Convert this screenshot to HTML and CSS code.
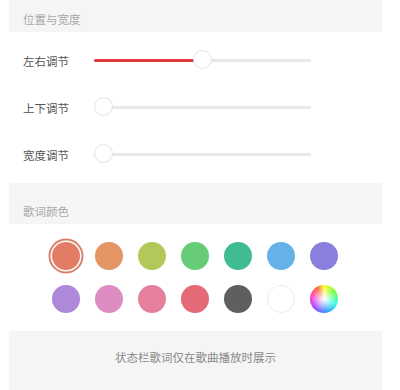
FILE: index.html
```html
<!DOCTYPE html>
<html>
<head>
<meta charset="utf-8">
<link rel="stylesheet" href="styles.css">
</head>
<body>
<div class="page">
  <div class="header h1">位置与宽度</div>
  <div class="sliders">
    <div class="row">
      <span class="label">左右调节</span>
      <div class="track">
        <div class="fill" style="width:108px"></div>
        <div class="thumb" style="left:99px"></div>
      </div>
    </div>
    <div class="row">
      <span class="label">上下调节</span>
      <div class="track">
        <div class="thumb" style="left:0"></div>
      </div>
    </div>
    <div class="row">
      <span class="label">宽度调节</span>
      <div class="track">
        <div class="thumb" style="left:0"></div>
      </div>
    </div>
  </div>
  <div class="header h2">歌词颜色</div>
  <div class="colors">
    <div class="crow">
      <span class="dot sel" style="background:#e27c67"></span>
      <span class="dot" style="background:#e39563"></span>
      <span class="dot" style="background:#b2c95a"></span>
      <span class="dot" style="background:#66cc77"></span>
      <span class="dot" style="background:#3fbc94"></span>
      <span class="dot" style="background:#65b2e8"></span>
      <span class="dot" style="background:#8a7fdc"></span>
    </div>
    <div class="crow">
      <span class="dot" style="background:#ae88d9"></span>
      <span class="dot" style="background:#dc8cc0"></span>
      <span class="dot" style="background:#e5809c"></span>
      <span class="dot" style="background:#e46a78"></span>
      <span class="dot" style="background:#5f5f5f"></span>
      <span class="dot white"></span>
      <span class="dot rainbow"></span>
    </div>
  </div>
  <div class="footer">状态栏歌词仅在歌曲播放时展示</div>
</div>
</body>
</html>
```
FILE: styles.css
```css
html, body {
  margin: 0;
  padding: 0;
  background: #fff;
}
body {
  font-family: "Noto Sans CJK SC", "Noto Sans", sans-serif;
  width: 400px;
  height: 390px;
  overflow: hidden;
}
.page {
  margin: 0 18px 0 9px;
}
.header {
  background: #f5f5f5;
  color: #a8a8a8;
  font-size: 11.5px;
  padding-left: 14px;
  box-sizing: border-box;
}
.h1 {
  height: 32px;
  line-height: 26px;
  padding-top: 6px;
}
.h2 {
  height: 41px;
  line-height: 16px;
  padding-top: 20px;
}
.sliders {
  padding: 5px 0 5px 14px;
}
.row {
  height: 47px;
  display: flex;
  align-items: center;
}
.label {
  width: 71px;
  font-size: 11.5px;
  color: #555;
}
.track {
  position: relative;
  width: 217px;
  height: 3px;
  background: #e8e8e8;
  border-radius: 2px;
}
.fill {
  position: absolute;
  left: 0;
  top: 0;
  height: 3px;
  background: #e0393e;
  border-radius: 2px;
}
.thumb {
  position: absolute;
  top: -8px;
  width: 17px;
  height: 17px;
  border-radius: 50%;
  background: #fff;
  border: 1px solid #e3e3e3;
  box-sizing: content-box;
  margin-top: -1px;
}
.colors {
  padding: 18px 0 18px 43px;
  display: flex;
  flex-direction: column;
  gap: 15px;
}
.crow {
  display: flex;
  gap: 15px;
}
.dot {
  width: 28px;
  height: 28px;
  border-radius: 50%;
  display: block;
}
.dot.sel {
  box-shadow: 0 0 0 1.5px #fff, 0 0 0 3.5px #d9806d;
}
.dot.white {
  background: #fff;
  border: 1px solid #ececec;
  box-sizing: border-box;
}
.dot.rainbow {
  background:
    radial-gradient(circle at 50% 50%, #fff 0%, rgba(255,255,255,0.8) 15%, rgba(255,255,255,0) 65%),
    conic-gradient(from 0deg, #ff3 0deg, #7f3 50deg, #3fd 110deg, #39f 170deg, #a4f 230deg, #f4c 280deg, #f63 330deg, #ff3 360deg);
}
.footer {
  background: #f5f5f5;
  height: 70px;
  padding-top: 17px;
  box-sizing: border-box;
  text-align: center;
  color: #888;
  font-size: 11.5px;
  line-height: 18px;
}
```
